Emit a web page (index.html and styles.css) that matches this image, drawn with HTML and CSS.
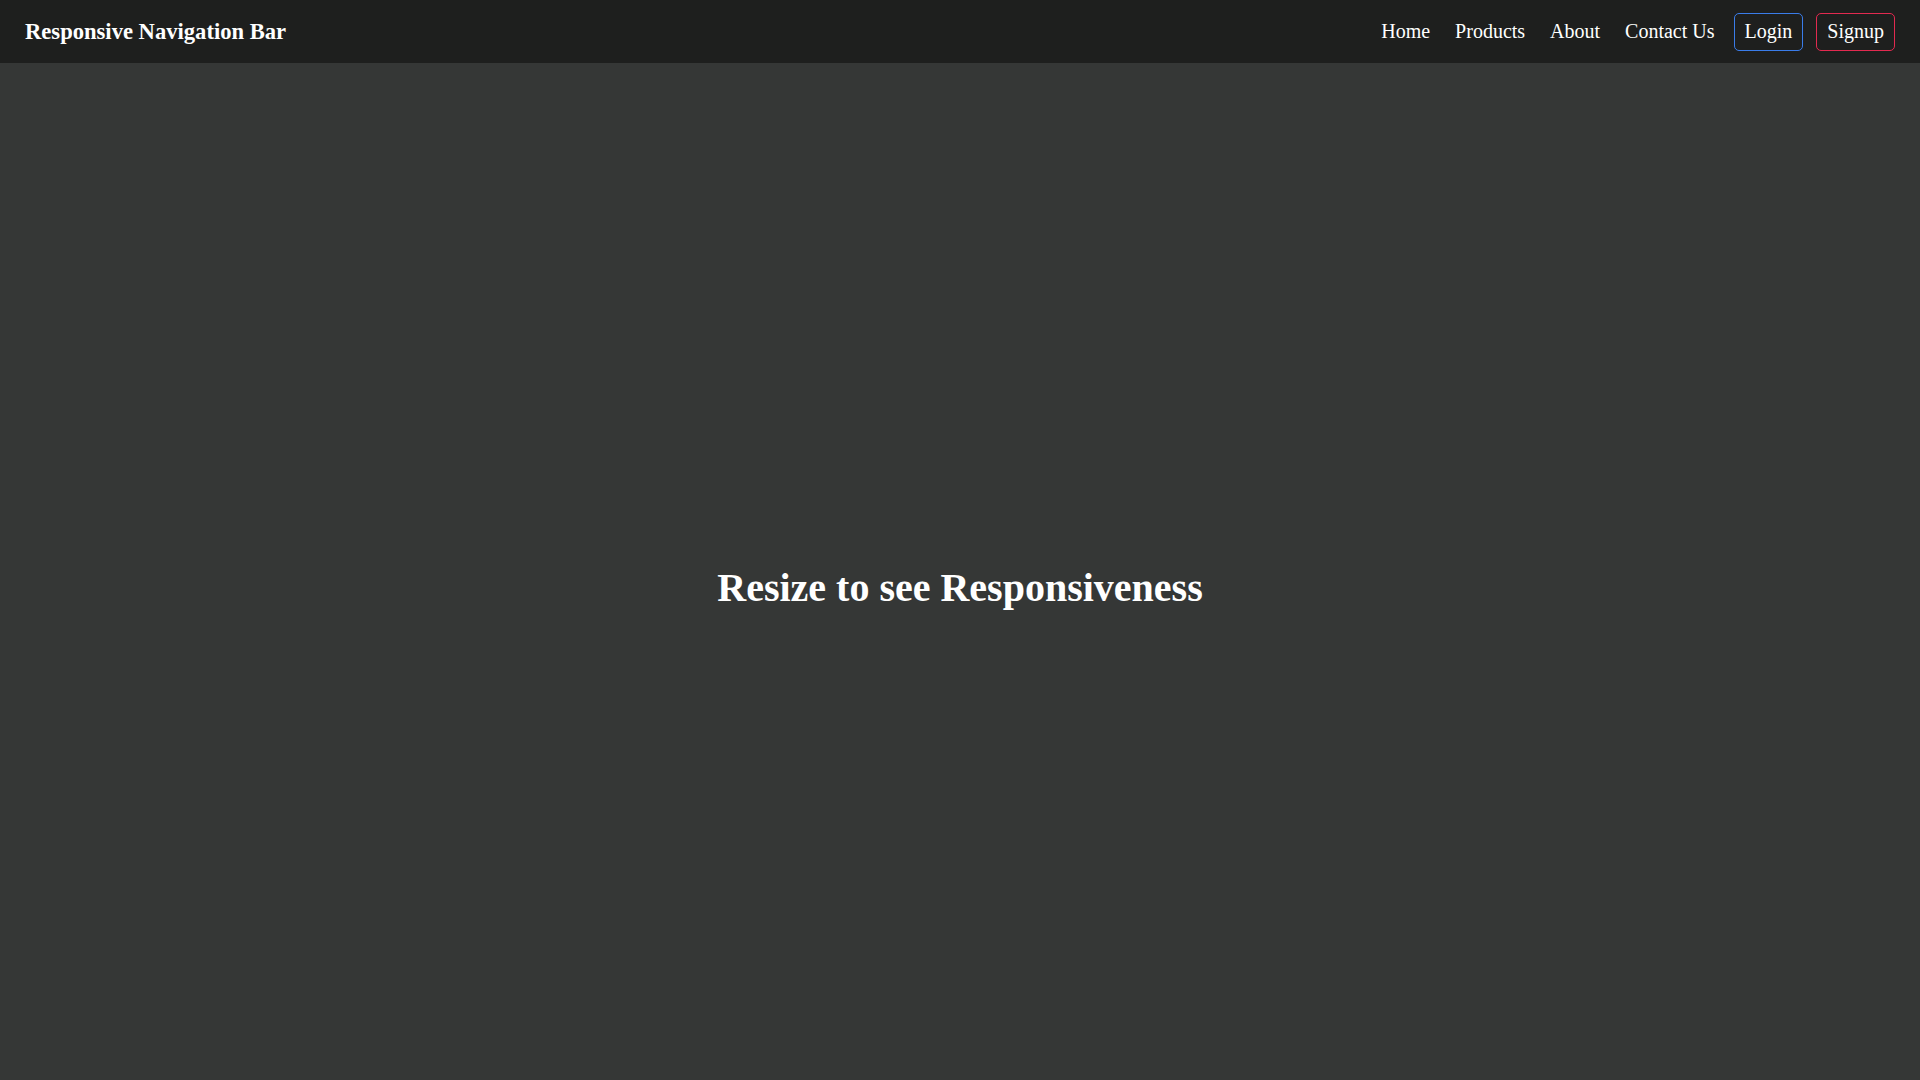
FILE: index.html
```html
<!DOCTYPE html>
<html lang="en">
<head>
<meta charset="utf-8">
<title>Responsive Navigation Bar</title>
<link rel="stylesheet" href="styles.css">
</head>
<body>
<header class="navbar">
  <div class="brand">Responsive Navigation Bar</div>
  <nav class="menu">
    <div class="links">
      <a class="link" href="#">Home</a>
      <a class="link" href="#">Products</a>
      <a class="link" href="#">About</a>
      <a class="link" href="#">Contact Us</a>
    </div>
    <div class="actions">
      <a class="btn btn-login" href="#">Login</a>
      <a class="btn btn-signup" href="#">Signup</a>
    </div>
  </nav>
</header>
<main class="content">
  <h1 class="headline">Resize to see Responsiveness</h1>
</main>
</body>
</html>
```
FILE: styles.css
```css
* { box-sizing: border-box; }
html, body { margin: 0; padding: 0; height: 100%; }
body {
  font-family: "Liberation Serif", "Times New Roman", serif;
  background: #353736;
  color: #ffffff;
  display: flex;
  flex-direction: column;
}
.navbar {
  height: 63px;
  flex: none;
  background: #1e1f1e;
  display: flex;
  align-items: center;
  justify-content: space-between;
  padding: 0 25px 0 25px;
}
.brand {
  font-weight: bold;
  font-size: 22.6px;
}
.menu {
  display: flex;
  align-items: center;
  gap: 19px;
}
.links {
  display: flex;
  align-items: center;
  gap: 25px;
}
.link {
  color: #ffffff;
  text-decoration: none;
  font-size: 20px;
}
.actions {
  display: flex;
  align-items: center;
  gap: 13px;
}
.btn {
  color: #ffffff;
  text-decoration: none;
  font-size: 20px;
  height: 38px;
  display: flex;
  align-items: center;
  padding: 0 10px;
  border-radius: 5px;
  border: 1px solid;
}
.btn-login { border-color: #3a7ce9; }
.btn-signup { border-color: #e32a50; }
.content {
  flex: 1;
  display: flex;
  align-items: center;
  justify-content: center;
  padding-top: 31px;
}
.headline {
  margin: 0;
  font-size: 40px;
  font-weight: bold;
}
```
